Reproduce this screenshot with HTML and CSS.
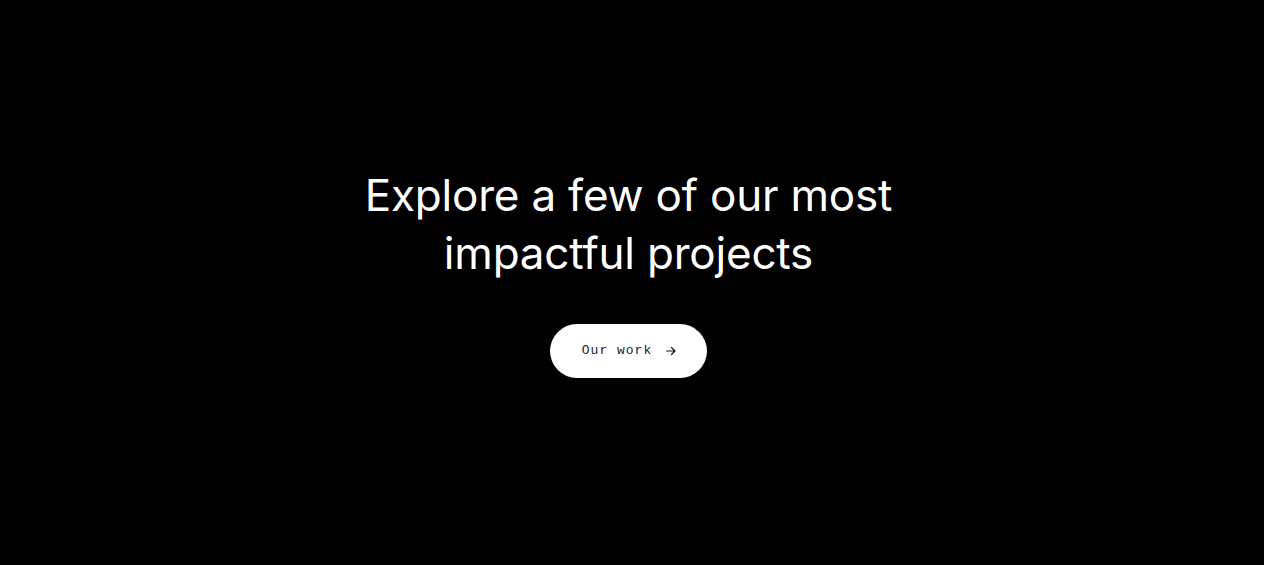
FILE: index.html
```html
<!DOCTYPE html>
<html lang="en">
<head>
<meta charset="utf-8">
<title>Our work</title>
<link rel="stylesheet" href="styles.css">
</head>
<body>
<main class="hero">
  <h1 class="title">Explore a few of our most<br>impactful projects</h1>
  <a class="btn" href="#">
    <span class="btn-label">Our work</span>
    <svg class="btn-arrow" width="12" height="12" viewBox="0 0 12 12" aria-hidden="true">
      <path d="M1.5 6h8.5M6.5 2.5L10 6l-3.5 3.5" fill="none" stroke="#111" stroke-width="1.2" stroke-linecap="round" stroke-linejoin="round"/>
    </svg>
  </a>
</main>
</body>
</html>
```
FILE: styles.css
```css
html, body {
  margin: 0;
  padding: 0;
  background: #000;
}
body {
  font-family: Inter, "Liberation Sans", sans-serif;
  color: #fff;
}
.hero {
  height: 565px;
  display: flex;
  flex-direction: column;
  align-items: center;
  justify-content: center;
  padding: 0 7px 22px 0;
  box-sizing: border-box;
}
.title {
  margin: 0;
  font-size: 44px;
  font-weight: 400;
  line-height: 58px;
  letter-spacing: -0.2px;
  text-align: center;
}
.btn {
  margin-top: 42px;
  display: flex;
  align-items: center;
  gap: 13px;
  height: 54px;
  padding: 0 30px 0 32px;
  background: #fff;
  border-radius: 27px;
  text-decoration: none;
  color: #222;
  box-sizing: border-box;
}
.btn-label {
  font-family: "Liberation Mono", "DejaVu Sans Mono", monospace;
  font-size: 13px;
  letter-spacing: 1px;
}
.btn-arrow {
  display: block;
}
```
